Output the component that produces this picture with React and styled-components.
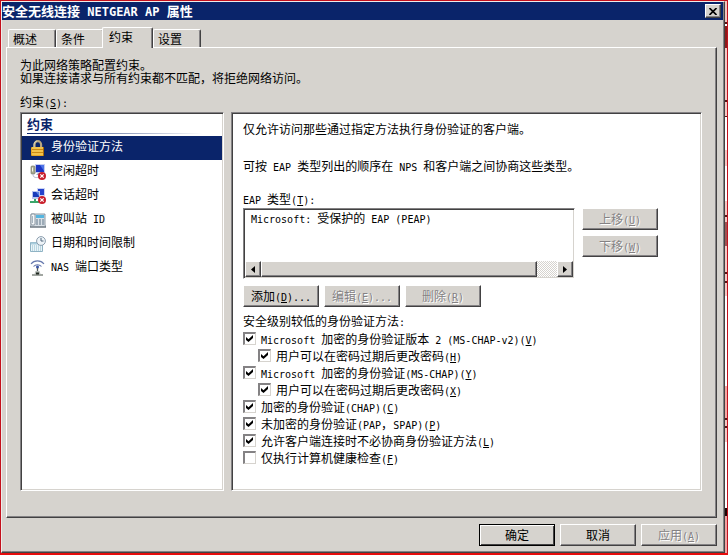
import { useState } from "react";
import styled, { createGlobalStyle, css } from "styled-components";

const colores = {
    cara: "#d6d3ce",
    marino: "#0a246a",
    sombra: "#848284",
    oscuro: "#424142",
    blanco: "#ffffff",
    rojo: "#c4101c",
};

const Global = createGlobalStyle`
    * {
        box-sizing: border-box;
    }

    body {
        margin: 0;
        font-family: "Noto Sans CJK SC", "Liberation Sans", sans-serif;
        font-size: 12px;
        line-height: 16px;
        color: #000;
    }

    button, input {
        font: inherit;
        color: inherit;
    }

    p, h1, h2, ul {
        margin: 0;
        padding: 0;
    }
`;

const hundido = css`
    padding: 1px;
    border: 1px solid;
    border-color: ${colores.sombra} ${colores.blanco} ${colores.blanco} ${colores.sombra};
    box-shadow: inset 1px 1px 0 ${colores.oscuro}, inset -1px -1px 0 ${colores.cara};
    background: ${colores.blanco};
`;

const relieve = css`
    background: ${colores.cara};
    border: 1px solid;
    border-color: ${colores.blanco} ${colores.oscuro} ${colores.oscuro} ${colores.blanco};
    box-shadow: inset -1px -1px 0 ${colores.sombra};
`;

const Marco = styled.div`
    display: flex;
    min-height: 100vh;
    border: 1px solid ${colores.rojo};
    border-bottom: 2px solid #e60c0c;
    padding-right: 2px;
    background: linear-gradient(
        #f4c4c0 21px, #5a1414 21px 23px, #fff 23px 25px, #8c1c1c 25px 47px,
        #f6c8c4 47px 99px, #5a1414 99px 101px, #f6c8c4 101px 115px, #5a1414 115px 116px,
        #fff 116px 149px, #f6c8c4 149px 165px, #fff 165px 200px, #f6c8c4 200px 214px,
        #5a1414 214px 216px, #f6c8c4 216px 221px, #a05454 221px 245px, #f6c8c4 245px 271px,
        #5a1414 271px 273px, #f6c8c4 273px 280px, #5a1414 280px 282px, #f6c8c4 282px 295px,
        #fff 295px 385px, #f4a8a4 385px 417px, #5a1414 417px 419px, #f6c8c4 419px 425px,
        #5a1414 425px 427px, #f6c8c4 427px 441px, #fff 441px 507px, #200404 507px 515px,
        #f0a0a0 515px
    );
`;

const Dialogo = styled.main`
    flex: 1;
    display: flex;
    flex-direction: column;
    background: ${colores.cara};
    border: 1px solid;
    border-color: #efedea ${colores.oscuro} ${colores.oscuro} #efedea;
    box-shadow: inset -1px -1px 0 ${colores.sombra};
`;

const Latino = styled.span`
    font-family: "DejaVu Sans Mono", "Liberation Mono", monospace;
    font-size: 10px;
    line-height: 1;
    white-space: pre;
`;

const BarraTitulo = styled.header`
    display: flex;
    align-items: center;
    justify-content: space-between;
    height: 18px;
    margin-right: 1px;
    padding-right: 2px;
    background: ${colores.marino};
    color: #fff;

    h1 {
        font-size: 13px;
        line-height: 18px;
        font-weight: bold;
    }

    ${Latino} {
        font-size: 12px;
    }
`;

const Cerrar = styled.button`
    ${relieve}
    display: flex;
    align-items: center;
    justify-content: center;
    width: 16px;
    height: 14px;
    padding: 0;
    color: #000;
`;

const Cuerpo = styled.div`
    flex: 1;
    display: flex;
    flex-direction: column;
    padding: 7px 7px 6px 4px;
`;

const Pestanas = styled.div`
    display: flex;
    align-items: flex-end;
    height: 20px;
    padding-left: 2px;
`;

const Pestana = styled.button`
    height: 18px;
    padding: 0 18px 0 4px;
    line-height: 17px;
    background: ${colores.cara};
    border: solid;
    border-width: 1px 1px 0 1px;
    border-color: ${colores.blanco} ${colores.oscuro} ${colores.blanco} ${colores.blanco};
    border-radius: 2px 2px 0 0;
    box-shadow: inset -1px 0 0 ${colores.sombra};

    ${({ $activa }) => $activa && css`
        position: relative;
        height: 21px;
        margin: 0 0 -1px -2px;
        padding: 0 19px 3px 6px;
    `}
`;

const Panel = styled.section`
    flex: 1;
    display: flex;
    flex-direction: column;
    padding: 10px 14px 26px 13px;
    border: 1px solid;
    border-color: ${colores.blanco} ${colores.oscuro} ${colores.oscuro} ${colores.blanco};
    box-shadow: inset -1px -1px 0 ${colores.sombra};
`;

const Introduccion = styled.p`
    line-height: 13px;
`;

const Etiqueta = styled.p`
    margin: 10px 0 2px;
`;

const Columnas = styled.div`
    flex: 1;
    display: flex;
    gap: 7px;
`;

const Lista = styled.nav`
    ${hundido}
    flex: 0 0 204px;

    h2 {
        margin: 0 20px 2px 5px;
        font-size: 13px;
        line-height: 19px;
        color: ${colores.marino};
        border-bottom: 1px solid;
        border-image: linear-gradient(90deg, ${colores.marino}, #fff) 1;
    }

    ul {
        list-style: none;
    }
`;

const Opcion = styled.button`
    display: flex;
    gap: 5px;
    width: 100%;
    height: 24px;
    padding: 0 8px;
    border: 0;
    text-align: left;
    line-height: 20px;
    background: ${({ $activa }) => ($activa ? colores.marino : "transparent")};
    color: ${({ $activa }) => ($activa ? "#fff" : "#000")};

    svg {
        flex: none;
        margin-top: 4px;
    }
`;

const Detalle = styled.div`
    ${hundido}
    flex: 1;
    min-width: 0;
    padding: 8px 43px 8px 11px;
`;

const Parrafo = styled.p`
    margin-bottom: ${({ $margen }) => $margen}px;
`;

const Fila = styled.div`
    display: flex;
    gap: 7px;
`;

const Caja = styled.div`
    ${hundido}
    flex: 1;
    min-width: 0;
    height: 71px;
    display: flex;
    flex-direction: column;
    justify-content: space-between;
`;

const Elementos = styled.ul`
    && {
        padding-left: 6px;
        list-style: none;
    }
`;

const Desplazamiento = styled.div`
    display: flex;
    height: 16px;
    background: repeating-conic-gradient(#fff 0 25%, ${colores.cara} 0 50%) 0 0 / 2px 2px;
`;

const Flecha = styled.button`
    ${relieve}
    display: flex;
    align-items: center;
    justify-content: center;
    width: 16px;
    padding: 0;
`;

const Pulgar = styled.div`
    ${relieve}
    flex: 1;
    margin-right: 20px;
`;

const Columna = styled.div`
    display: flex;
    flex-direction: column;
    gap: 5px;
`;

const Botones = styled.div`
    display: flex;
    gap: 5px;
    margin: 6px 0;
`;

const Boton = styled.button`
    ${relieve}
    width: 76px;
    height: 22px;
    padding: 0;
    line-height: 18px;

    &:disabled {
        color: ${colores.sombra};
        text-shadow: 1px 1px 0 #fff;
    }

    ${({ $principal }) => $principal && css`
        border-color: #000;
        box-shadow: inset 1px 1px 0 #fff, inset -1px -1px 0 ${colores.oscuro};
    `}
`;

const Pie = styled.footer`
    display: flex;
    justify-content: flex-end;
    gap: 5px;
    margin-top: 6px;
`;

const Casilla = styled.label`
    display: flex;
    align-items: center;
    gap: 5px;
    height: 17px;
    padding-left: ${({ $nivel }) => $nivel * 15}px;

    input {
        appearance: none;
        flex: none;
        width: 13px;
        height: 13px;
        margin: 0;
        border: solid;
        border-width: 2px 1px 1px 2px;
        border-color: ${colores.sombra} ${colores.cara} ${colores.cara} ${colores.sombra};
        background: #fff;
    }

    input:checked::before {
        content: "";
        display: block;
        width: 7px;
        height: 7px;
        margin: 1px;
        background: #000;
        clip-path: polygon(0 28%, 36% 60%, 100% 0, 100% 42%, 36% 100%, 0 70%);
    }
`;

// "&X" marca la tecla de acceso, que va subrayada
const Texto = ({ children }) =>
    children.split(/([\x20-\x7e]+)/).map((parte, i) => {
        if (i % 2 === 0) return parte;
        const [antes, despues] = parte.split("&");
        return (
            <Latino key={i}>
                {antes}
                {despues && <u>{despues[0]}</u>}
                {despues && despues.slice(1)}
            </Latino>
        );
    });

const Candado = () => (
    <svg width="16" height="16" viewBox="0 0 16 16">
        <path d="M4.5 8V4.5a3.3 3.3 0 0 1 6.6 0V8" fill="none" stroke="#b7a680" strokeWidth="2.2" />
        <path d="M4 7V4a3.6 3.6 0 0 1 3-3" fill="none" stroke="#f0e8cc" strokeWidth=".7" />
        <rect x="1" y="7" width="13" height="9" rx="1" fill="#e5a526" />
        <path d="M2 8h11M2 11h11M2 14h11" stroke="#ffdf70" />
        <path d="M2 9.5h11M2 12.5h11" stroke="#c98814" />
        <path d="M13.5 7v9" stroke="#a66a0a" />
    </svg>
);

const Prohibido = () => (
    <g>
        <circle cx="12" cy="12" r="4" fill="#c91f2c" />
        <path d="m10.3 10.3 3.4 3.4m0-3.4-3.4 3.4" stroke="#fff" strokeWidth="1.2" />
    </g>
);

const Inactivo = () => (
    <svg width="16" height="16" viewBox="0 0 16 16">
        <rect x="5" y="0" width="10" height="9" fill="#c5cdf0" />
        <rect x="6" y="1" width="8" height="7" fill="#1b35c2" />
        <path d="M10 1h4v6z" fill="#4d74e8" />
        <path d="M8 9h4l-1 2H6z" fill="#9ca5c8" />
        <rect x="1" y="2" width="4" height="8" rx="1" fill="#a7aa91" stroke="#696d60" strokeWidth=".6" />
        <path d="M2.5 3.5v4" stroke="#f4f4e8" />
        <path d="M3 10c0 4 3 4 6 3" fill="none" stroke="#b5b8cf" />
        <Prohibido />
    </svg>
);

const Sesion = () => (
    <svg width="16" height="16" viewBox="0 0 16 16">
        <rect x="7" y="0" width="8" height="8" fill="#cbd3f4" />
        <rect x="8" y="1" width="6" height="6" fill="#2543cc" />
        <rect x="2" y="3" width="8" height="8" fill="#b8c5ee" />
        <rect x="3" y="4" width="6" height="5" fill="#173cba" />
        <path d="M6 4h3v4z" fill="#5b83e4" />
        <path d="M0 14h9M5 11v3" stroke="#3aa66a" strokeWidth="2" />
        <Prohibido />
    </svg>
);

const Telefono = () => (
    <svg width="16" height="16" viewBox="0 0 16 16">
        <path d="M1 2h14v11l1 2H0l1-2z" fill="#d9e0e6" stroke="#748390" strokeWidth=".8" />
        <rect x="1" y="2" width="4" height="11" rx="1" fill="#f4f7f9" stroke="#71808d" strokeWidth=".8" />
        <path d="M2.5 4v7" stroke="#a7b5c0" />
        <rect x="6" y="3" width="8" height="3" fill="#55b5df" />
        <path d="M6 8h8M6 10h8M6 12h8" stroke="#607788" strokeDasharray="2 1" />
        <path d="M0 15h16" stroke="#5f6870" />
    </svg>
);

const Calendario = () => (
    <svg width="16" height="16" viewBox="0 0 16 16">
        <path d="M.5 6.5h12v9H.5z" fill="#eaf4f8" stroke="#8fb3c4" />
        <path d="M1 7.5h11" stroke="#a9cddd" strokeWidth="2" />
        <path d="M2 10h9M2 12h9M2 14h9" stroke="#8cbacb" strokeDasharray="1 1" />
        <circle cx="11" cy="5" r="4.4" fill="#eef4f8" stroke="#8c9eae" />
        <path d="M11 2v3h2.5" fill="none" stroke="#50677c" />
    </svg>
);

const Antena = () => (
    <svg width="16" height="16" viewBox="0 0 16 16">
        <path d="M1 4a8.4 8.4 0 0 1 13 0M3.5 6.5a5.4 5.4 0 0 1 8 0" fill="none" stroke="#6678ad" strokeWidth="1.1" />
        <circle cx="7.5" cy="7" r="1.5" fill="#3954a5" />
        <path d="M7.5 8v6" stroke="#555b60" strokeWidth="1.3" />
        <path d="M5.5 11h4l1 3h-6z" fill="#b7bdb9" />
        <path d="M2 15h11" stroke="#8a908a" strokeWidth="1.6" />
        <path d="M6 13.5h3" stroke="#202820" strokeWidth="2" />
    </svg>
);

const Triangulo = ({ derecha }) => (
    <svg width="4" height="7" viewBox="0 0 4 7">
        <path d={derecha ? "M0 0v7l4-3.5z" : "M4 0v7L0 3.5z"} />
    </svg>
);

const pestanas = ["概述", "条件", "约束", "设置"];

const opciones = [
    { nombre: "身份验证方法", Icono: Candado },
    { nombre: "空闲超时", Icono: Inactivo },
    { nombre: "会话超时", Icono: Sesion },
    { nombre: "被叫站 ID", Icono: Telefono },
    { nombre: "日期和时间限制", Icono: Calendario },
    { nombre: "NAS 端口类型", Icono: Antena },
];

const metodos = [
    { texto: "Microsoft 加密的身份验证版本 2 (MS-CHAP-v2)(&V)", nivel: 0, marcado: true },
    { texto: "用户可以在密码过期后更改密码(&H)", nivel: 1, marcado: true },
    { texto: "Microsoft 加密的身份验证(MS-CHAP)(&Y)", nivel: 0, marcado: true },
    { texto: "用户可以在密码过期后更改密码(&X)", nivel: 1, marcado: true },
    { texto: "加密的身份验证(CHAP)(&C)", nivel: 0, marcado: true },
    { texto: "未加密的身份验证(PAP，SPAP)(&P)", nivel: 0, marcado: true },
    { texto: "允许客户端连接时不必协商身份验证方法(&L)", nivel: 0, marcado: true },
    { texto: "仅执行计算机健康检查(&F)", nivel: 0, marcado: false },
];

const App = () => {
    const [pestana, setPestana] = useState("约束");
    const [opcion, setOpcion] = useState("身份验证方法");

    return (
        <Marco>
            <Global />
            <Dialogo>
                <BarraTitulo>
                    <h1><Texto>安全无线连接 NETGEAR AP 属性</Texto></h1>
                    <Cerrar aria-label="关闭">
                        <svg width="8" height="7" viewBox="0 0 8 7">
                            <path d="m.5 0 7 7m0-7-7 7" stroke="#000" strokeWidth="1.6" />
                        </svg>
                    </Cerrar>
                </BarraTitulo>
                <Cuerpo>
                    <Pestanas role="tablist">
                        {pestanas.map((nombre) => (
                            <Pestana
                                key={nombre}
                                role="tab"
                                aria-selected={pestana === nombre}
                                $activa={pestana === nombre}
                                onClick={() => setPestana(nombre)}
                            >
                                {nombre}
                            </Pestana>
                        ))}
                    </Pestanas>
                    <Panel role="tabpanel">
                        <Introduccion>
                            为此网络策略配置约束。
                            <br />
                            如果连接请求与所有约束都不匹配，将拒绝网络访问。
                        </Introduccion>
                        <Etiqueta><Texto>约束(&S):</Texto></Etiqueta>
                        <Columnas>
                            <Lista>
                                <h2>约束</h2>
                                <ul>
                                    {opciones.map(({ nombre, Icono }) => (
                                        <li key={nombre}>
                                            <Opcion $activa={opcion === nombre} onClick={() => setOpcion(nombre)}>
                                                <Icono />
                                                <span><Texto>{nombre}</Texto></span>
                                            </Opcion>
                                        </li>
                                    ))}
                                </ul>
                            </Lista>
                            <Detalle>
                                <Parrafo $margen={21}>仅允许访问那些通过指定方法执行身份验证的客户端。</Parrafo>
                                <Parrafo $margen={17}>
                                    <Texto>可按 EAP 类型列出的顺序在 NPS 和客户端之间协商这些类型。</Texto>
                                </Parrafo>
                                <Parrafo $margen={1}><Texto>EAP 类型(&T):</Texto></Parrafo>
                                <Fila>
                                    <Caja>
                                        <Elementos>
                                            <li><Texto>Microsoft: 受保护的 EAP (PEAP)</Texto></li>
                                        </Elementos>
                                        <Desplazamiento>
                                            <Flecha aria-label="向左"><Triangulo /></Flecha>
                                            <Pulgar />
                                            <Flecha aria-label="向右"><Triangulo derecha /></Flecha>
                                        </Desplazamiento>
                                    </Caja>
                                    <Columna>
                                        <Boton disabled><Texto>上移(&U)</Texto></Boton>
                                        <Boton disabled><Texto>下移(&W)</Texto></Boton>
                                    </Columna>
                                </Fila>
                                <Botones>
                                    <Boton><Texto>添加(&D)...</Texto></Boton>
                                    <Boton disabled><Texto>编辑(&E)...</Texto></Boton>
                                    <Boton disabled><Texto>删除(&R)</Texto></Boton>
                                </Botones>
                                <Parrafo $margen={1}><Texto>安全级别较低的身份验证方法:</Texto></Parrafo>
                                {metodos.map(({ texto, nivel, marcado }) => (
                                    <Casilla key={texto} $nivel={nivel}>
                                        <input type="checkbox" defaultChecked={marcado} />
                                        <span><Texto>{texto}</Texto></span>
                                    </Casilla>
                                ))}
                            </Detalle>
                        </Columnas>
                    </Panel>
                    <Pie>
                        <Boton $principal>确定</Boton>
                        <Boton>取消</Boton>
                        <Boton disabled><Texto>应用(&A)</Texto></Boton>
                    </Pie>
                </Cuerpo>
            </Dialogo>
        </Marco>
    );
};

export default App;
